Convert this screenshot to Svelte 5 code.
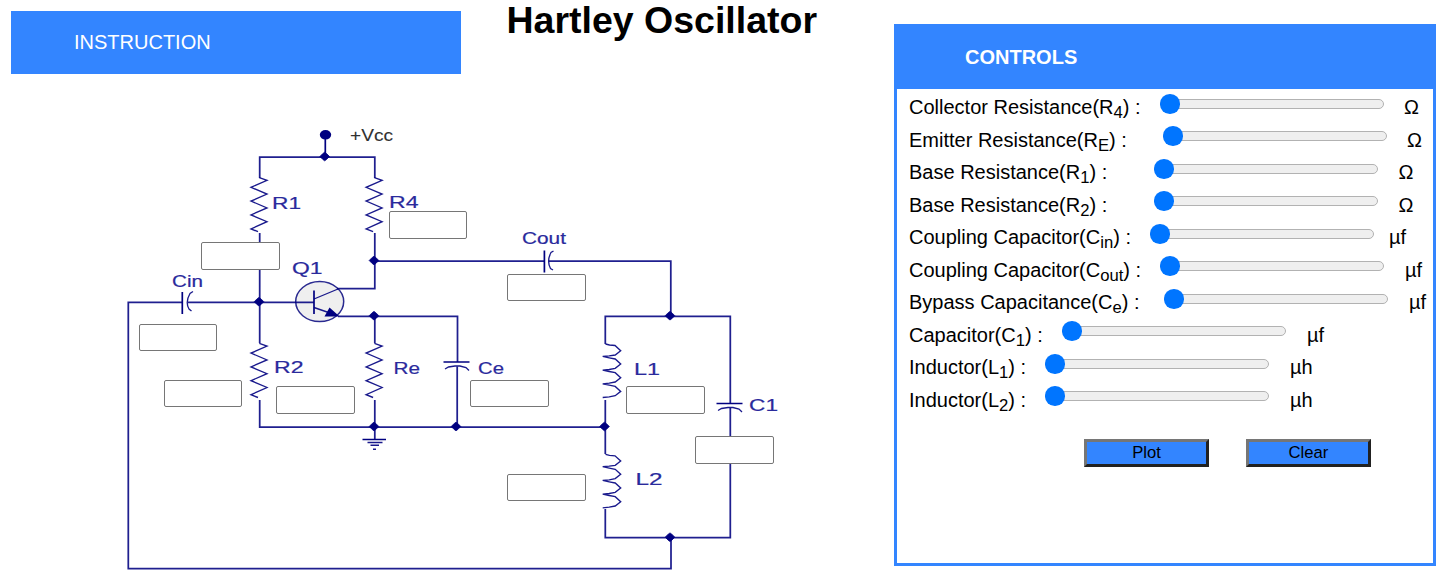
<script>
  // gap: label start to slider, after: slider end to unit
  const controls = [
    { name: 'Collector Resistance(R', sub: '4', gap: 251, unit: 'Ω', after: 20 },
    { name: 'Emitter Resistance(R', sub: 'E', gap: 254, unit: 'Ω', after: 20 },
    { name: 'Base Resistance(R', sub: '1', gap: 245, unit: 'Ω', after: 20.5 },
    { name: 'Base Resistance(R', sub: '2', gap: 245, unit: 'Ω', after: 20.5 },
    { name: 'Coupling Capacitor(C', sub: 'in', gap: 241, unit: 'µf', after: 15 },
    { name: 'Coupling Capacitor(C', sub: 'out', gap: 251, unit: 'µf', after: 21 },
    { name: 'Bypass Capacitance(C', sub: 'e', gap: 255, unit: 'µf', after: 21 },
    { name: 'Capacitor(C', sub: '1', gap: 153, unit: 'µf', after: 21 },
    { name: 'Inductor(L', sub: '1', gap: 136, unit: 'µh', after: 21 },
    { name: 'Inductor(L', sub: '2', gap: 136, unit: 'µh', after: 21 }
  ];
  const fields = [
    [201, 242, 79, 28], [389, 211, 78, 28], [507, 274, 79, 27], [139, 324, 78, 27],
    [164, 380, 78, 27], [276, 386, 79, 28], [470, 380, 79, 27], [626, 386, 79, 28],
    [695, 436, 79, 28], [507, 474, 79, 27]
  ];
  const labels = [
    ['R1', 272, 209, 29], ['R4', 389, 207.5, 29.5], ['Q1', 292, 274, 30.5], ['Cin', 172, 286.5, 31],
    ['Cout', 522, 243.5, 44], ['R2', 274, 372.8, 29.5], ['Re', 393.5, 373.5, 26.5], ['Ce', 478, 373.5, 26],
    ['L1', 634, 375, 26], ['L2', 635.5, 484.8, 27], ['C1', 749, 411, 29]
  ];
  const nodes = [
    [324.7, 156.5], [374, 260.5], [259, 301.7], [374, 315.7], [374, 426.5], [456, 426.5],
    [604.5, 426.5], [670, 315.7], [670, 537.2]
  ];
  const resistors = [[259.3, 177.6], [374.4, 177.6], [259.3, 343.4], [374.4, 343.4]];
  const zigzag = 'l7.7 2.7 l-16 7 l16 6.8 l-16 7 l16 6.8 l-16 7 l16 6.8 l-16 7.2 l7 2.8';
  const coils = [[605.5, 344], [605.5, 454.3]];
  const coil = 'l4 1 l5.5 .5 l5.7 5.2 l-5.5 4.3 l-6 .8 l-6.5 .6'
    + 'l6.5 1.4 l6 1.2 l5.5 5 l-5.5 4.3 l-6 1.2 l-6.5 .6'.repeat(3);
</script>

<main>
  <section class="left">
    <header>
      <div class="instruction">INSTRUCTION</div>
      <h1>Hartley Oscillator</h1>
    </header>
    <div class="circuit">
      <svg width="883" height="504" viewBox="0 74 883 504">
        <ellipse cx="319.7" cy="301.6" rx="24" ry="20" fill="#efefef" stroke="#2a2a90" stroke-width="1.5" />
        <g class="wire">
          <path d="M259.7 178V157H374.8V178M259.7 233V343M374.8 233V288.5H337M374 261H544M549 261H670.8V316.5" />
          <path d="M182 302.3H128.3V568.5H671V538M188 302.3H314M338 316.3H457.5V362M374.8 316V343M457.2 366.5V427" />
          <path d="M259.7 400V427H605M374.8 400V439M605.3 344V316.3H730.3V403.5M730.3 408V537.7H605.3V509M605.3 400V454" />
        </g>
        <g class="part">
          {#each resistors as [x, y]}<path d={`M${x} ${y}${zigzag}`} />{/each}
          {#each coils as [x, y]}<path d={`M${x} ${y}${coil}`} />{/each}
          <path d="M193 291.5L190 293.5Q185 302 189 309L191.5 311M553.5 251L551 252.5Q546.5 261 550.5 268.5L553 270" />
          <path d="M445 369L448.5 367L455 366H460L466 367.5L469 370.5M718 410.5L721.5 408.5L728 407.5H733L739 409L742 412" />
          <path d="M314 299L338 289M314 307.5L330 313" />
          <path d="M367.5 442.5H382.5M370.5 445.2H379M373 449.2H376" />
        </g>
        <path class="plate" d="M182.3 292V314M544.4 250.5V272.5M443.5 362H469.5M716.5 403.5H742.5M314 290.5V314M362.5 439.5H386M325.3 135V157" />
        <path d="M324.5 316.5L329.5 307.5L338.5 315.5V316.5Z" fill="#000080" />
        <ellipse cx="325.5" cy="134.8" rx="5.7" ry="4.8" fill="#000080" />
        {#each nodes as [x, y]}
          <path d={`M${x - 4.8} ${y}l3 -3 l1.8 -1.3 l1.8 1.3 l3 3 l-3 3 l-1.8 1.3 l-1.8 -1.3Z`} class="node" />
        {/each}
        <text x="350" y="141" textLength="43" lengthAdjust="spacingAndGlyphs" class="vcc">+Vcc</text>
        {#each labels as [t, x, y, w]}
          <text {x} {y} textLength={w} lengthAdjust="spacingAndGlyphs">{t}</text>
        {/each}
      </svg>
      {#each fields as [x, y, w, h]}
        <input class="value" type="text" style={`left:${x}px;top:${y - 74}px;width:${w}px;height:${h}px`} />
      {/each}
    </div>
  </section>

  <section class="panel">
    <h2>CONTROLS</h2>
    <div class="rows">
      {#each controls as c}
        <div class="row">
          <label style={`width:${c.gap}px`}>{c.name}<sub>{c.sub}</sub>) :</label>
          <input class="slider" type="range" min="0" max="100" value="0" />
          <span style={`margin-left:${c.after}px`}>{c.unit}</span>
        </div>
      {/each}
    </div>
    <div class="buttons"><button>Plot</button><button>Clear</button></div>
  </section>
</main>

<style>
  :global(body) { background: #fff; overflow: hidden; }
  main {
    display: flex;
    width: 1446px;
    height: 578px;
    font: 20px "Liberation Sans", Arial, sans-serif;
    color: #000;
  }
  .left { width: 894px; flex: none; }
  header { display: flex; height: 74px; box-sizing: border-box; padding-left: 11px; }
  .instruction {
    width: 450px;
    height: 63px;
    margin-top: 11px;
    box-sizing: border-box;
    padding-left: 63px;
    line-height: 62px;
    background: #3385ff;
    color: #fff;
  }
  h1 { margin: -1px 0 0 45.5px; font-size: 37.5px; line-height: 42px; height: 42px; white-space: nowrap; }
  .circuit { position: relative; height: 504px; }
  svg { display: block; }
  .wire path { fill: none; stroke: #000080; stroke-width: 1.75; stroke-opacity: .88; }
  .part path { fill: none; stroke: #000080; stroke-width: 1.35; stroke-opacity: .9; }
  .plate { fill: none; stroke: #000080; stroke-width: 1.7; }
  .node { fill: #000080; stroke: #000080; stroke-width: .8; }
  text { font: 16.5px "Liberation Sans", Arial, sans-serif; fill: #2a2a9c; stroke: #2a2a9c; stroke-width: .2; }
  .vcc { fill: #303030; stroke: #303030; stroke-width: .1; }
  .value {
    position: absolute;
    box-sizing: border-box;
    margin: 0;
    padding: 0 2px;
    border: 1px solid #767676;
    border-radius: 2px;
    background: #fff;
  }
  .panel {
    width: 542px;
    height: 542px;
    margin-top: 24px;
    box-sizing: border-box;
    border: 3px solid #3385ff;
    flex: none;
  }
  h2 {
    margin: 0;
    height: 62px;
    padding-left: 68px;
    font-size: 20px;
    line-height: 60px;
    background: #3385ff;
    color: #fff;
  }
  .rows { padding: 2px 0 0 12px; }
  .row { display: flex; height: 32.5px; align-items: flex-start; line-height: 32px; white-space: nowrap; }
  label { flex: none; }
  sub { font-size: 16.67px; line-height: 0; vertical-align: -4.4px; }
  .slider {
    appearance: none;
    flex: none;
    width: 224px;
    height: 20px;
    margin: 3px 0 0;
    background: transparent;
  }
  .row:nth-child(even) .slider { margin-top: 2.5px; }
  .slider::-webkit-slider-runnable-track {
    height: 10px;
    box-sizing: border-box;
    border: 1px solid #b2b2b2;
    border-radius: 5px;
    background: #efefef;
  }
  .slider::-webkit-slider-thumb {
    appearance: none;
    width: 19.5px;
    height: 19.5px;
    margin-top: -5.75px;
    border-radius: 50%;
    background: #0075ff;
    transform: translateX(-1px);
  }
  .buttons { display: flex; gap: 37px; padding: 23px 0 0 187px; }
  button {
    width: 125px;
    height: 28px;
    padding: 0;
    font: 16.67px "Liberation Sans", Arial, sans-serif;
    color: #000;
    background: #3385ff;
    border: 3px solid;
    border-color: #767676 #212121 #212121 #767676;
    border-radius: 0;
  }
</style>
